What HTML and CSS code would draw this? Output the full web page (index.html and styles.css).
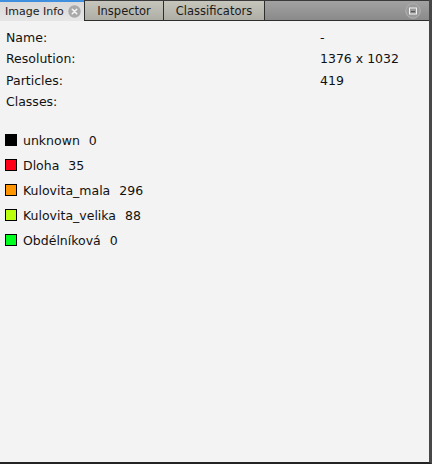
FILE: index.html
```html
<!DOCTYPE html>
<html>
<head>
<meta charset="utf-8">
<link rel="stylesheet" href="styles.css">
</head>
<body>
<div class="panel">
  <div class="tabbar">
    <div class="tab active">
      <span class="tab-label">Image Info</span>
      <svg class="close" width="13" height="13" viewBox="0 0 13 13"><circle cx="6.5" cy="6.5" r="6.2" fill="#a9a9a9"/><path d="M4.3 4.3 L8.7 8.7 M8.7 4.3 L4.3 8.7" stroke="#f4f4f4" stroke-width="1.6" stroke-linecap="round"/></svg>
    </div>
    <div class="tab inactive tab-inspector"><span class="tab-label">Inspector</span></div>
    <div class="tab inactive tab-class"><span class="tab-label">Classificators</span></div>
    <div class="filler">
      <svg class="maxi" width="16" height="16" viewBox="0 0 16 16"><circle cx="8" cy="8" r="7.3" fill="#9a9a9a" stroke="#b0b0b0" stroke-width="1"/><rect x="4.5" y="5" width="7" height="6" fill="none" stroke="#f2f2f2" stroke-width="1"/><rect x="6" y="8" width="4" height="1.2" fill="#555"/></svg>
    </div>
  </div>
  <div class="content">
    <div class="info">
      <div class="row"><span class="key">Name:</span><span class="val">-</span></div>
      <div class="row"><span class="key">Resolution:</span><span class="val">1376 x 1032</span></div>
      <div class="row"><span class="key">Particles:</span><span class="val">419</span></div>
      <div class="row"><span class="key">Classes:</span><span class="val"></span></div>
    </div>
    <div class="legend">
      <div class="item"><span class="sw" style="background:#000000"></span><span>unknown</span><span class="num">0</span></div>
      <div class="item"><span class="sw" style="background:#ff0019"></span><span>Dloha</span><span class="num">35</span></div>
      <div class="item"><span class="sw" style="background:#ff9500"></span><span>Kulovita_mala</span><span class="num">296</span></div>
      <div class="item"><span class="sw" style="background:#bbff10"></span><span>Kulovita_velika</span><span class="num">88</span></div>
      <div class="item"><span class="sw" style="background:#00ff1e"></span><span>Obdélníková</span><span class="num">0</span></div>
    </div>
  </div>
</div>
</body>
</html>
```
FILE: styles.css
```css
html, body {
  margin: 0;
  padding: 0;
  background: #f3f3f3;
}
body {
  font-family: "DejaVu Sans", "Liberation Sans", sans-serif;
  font-size: 12.5px;
  color: #111;
}
.panel {
  width: 432px;
  height: 464px;
  box-sizing: border-box;
  border-right: 3px solid #474747;
  border-bottom: 2px solid #232323;
  display: flex;
  flex-direction: column;
  background: #f3f3f3;
}
.tabbar {
  height: 21px;
  display: flex;
  flex: none;
  border-top: 1px solid #3a3a3a;
  box-sizing: border-box;
}
.tab {
  display: flex;
  align-items: center;
  box-sizing: border-box;
  height: 20px;
  font-size: 11.5px;
  color: #1a1a1a;
  white-space: nowrap;
}
.tab.active {
  width: 84px;
  flex: none;
  height: 21px;
  margin-top: -1px;
  padding-left: 5px;
  border-top: 2px solid #3f8fe0;
  background: linear-gradient(#dadada, #e6e6e6);
  gap: 4px;
  font-size: 11px;
}
.close {
  flex: none;
}
.tab.inactive {
  flex: none;
  justify-content: center;
  border-left: 1px solid #2e2e2e;
  border-bottom: 1px solid #2e2e2e;
  background: linear-gradient(#c6c6bd, #aeaea6);
  height: 20px;
}
.tab-inspector {
  width: 79px;
}
.tab-class {
  width: 101px;
}
.filler {
  flex: 1;
  height: 20px;
  box-sizing: border-box;
  border-left: 1px solid #2e2e2e;
  border-bottom: 1px solid #2e2e2e;
  background: linear-gradient(#a2a2a2, #8a8a8a);
  display: flex;
  align-items: center;
  justify-content: flex-end;
  padding-right: 8px;
}
.content {
  flex: 1;
  padding: 6px 0 0 6px;
}
.info {
  display: flex;
  flex-direction: column;
}
.row {
  display: grid;
  grid-template-columns: 314px 1fr;
  height: 21.3px;
  line-height: 21px;
}
.legend {
  margin-top: 21px;
  display: flex;
  flex-direction: column;
  gap: 11px;
  margin-left: -1px;
}
.item {
  display: flex;
  align-items: center;
  height: 14px;
  gap: 6px;
}
.sw {
  width: 12px;
  height: 12px;
  box-sizing: border-box;
  border: 1px solid #000;
  flex: none;
}
.num {
  margin-left: 3px;
}
```
